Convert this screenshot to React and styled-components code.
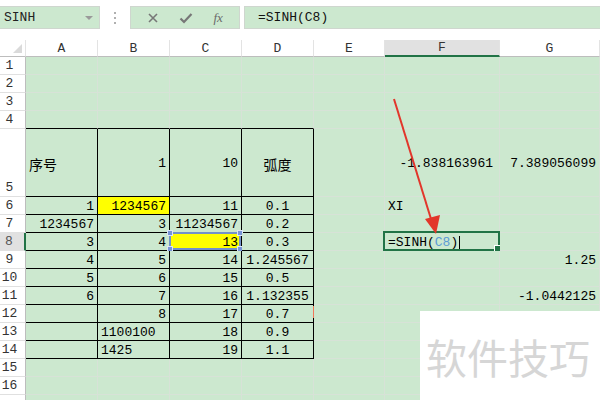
import React from "react";
import styled, { createGlobalStyle, css } from "styled-components";

const GREEN = "#cce8cf";
const GRID = "#d7e2d7";
const MONO = `"Liberation Mono", "DejaVu Sans Mono", monospace`;
const CJK = `"Noto Sans CJK SC", "Noto Sans", sans-serif`;

const Global = createGlobalStyle`
  html, body { margin: 0; padding: 0; background: #fff; }
  body { width: 600px; height: 400px; overflow: hidden; }
`;

const Page = styled.div`
  position: relative;
  width: 600px;
  height: 400px;
  overflow: hidden;
  background: #fff;
  font-family: ${MONO};
`;

const TopBar = styled.div`
  display: flex;
  align-items: center;
  height: 40px;
  padding: 6px 0 11px;
  box-sizing: border-box;
`;

const Box = styled.div`
  height: 23px;
  box-sizing: border-box;
  background: ${GREEN};
  border: 1px solid #cfd6cf;
  display: flex;
  align-items: center;
`;

const NameBox = styled(Box)`
  width: 100px;
  padding: 0 6px 0 4px;
  justify-content: space-between;
  font-size: 13px;
  color: #222;
  border-left: none;
`;

const Caret = styled.span`
  width: 0;
  height: 0;
  border-left: 4px solid transparent;
  border-right: 4px solid transparent;
  border-top: 4px solid #9a9a9a;
`;

const Dots = styled.div`
  width: 30px;
  display: flex;
  flex-direction: column;
  align-items: center;
  gap: 3px;
  & > span { width: 2px; height: 2px; background: #b0b0b0; }
`;

const IconBox = styled(Box)`
  width: 110px;
  justify-content: space-around;
  padding: 0 6px;
  color: #707070;
`;

const Fx = styled.span`
  font-family: "Liberation Serif", serif;
  font-style: italic;
  font-size: 13px;
  color: #6a6a6a;
`;

const FormulaBox = styled(Box)`
  flex: 1;
  margin-left: 4px;
  padding-left: 13px;
  font-size: 13px;
  color: #111;
  border-right: none;
`;

const Sheet = styled.div`
  display: grid;
  grid-template-columns: 26px 72px 72px 72px 72px 71px 115px 100px;
  grid-template-rows: ${(p) => p.$rows};
`;

const ColHead = styled.div`
  box-sizing: border-box;
  display: flex;
  align-items: center;
  justify-content: center;
  font-size: 13px;
  color: #333;
  background: ${(p) => (p.$active ? "#e1e1e1" : "#fff")};
  border-right: 1px solid #e3e3e3;
  border-bottom: ${(p) => (p.$active ? "2px solid #217346" : "1px solid #bdbdbd")};
`;

const Corner = styled.div`
  position: relative;
  background: #fff;
  box-sizing: border-box;
  border-right: 1px solid #e3e3e3;
  border-bottom: 1px solid #bdbdbd;
  &::after {
    content: "";
    position: absolute;
    right: 3px;
    bottom: 3px;
    border-left: 9px solid transparent;
    border-bottom: 9px solid #dadada;
  }
`;

const RowHead = styled.div`
  box-sizing: border-box;
  display: flex;
  align-items: flex-end;
  justify-content: center;
  padding: 0 6px 0 0;
  font-size: 13px;
  line-height: 17px;
  color: ${(p) => (p.$active ? "#555" : "#333")};
  background: ${(p) => (p.$active ? "#e1e1e1" : "#fff")};
  border-bottom: 1px solid #e0e0e0;
  border-right: ${(p) => (p.$active ? "2px solid #217346" : "1px solid #bdbdbd")};
`;

const Cell = styled.div`
  position: relative;
  box-sizing: border-box;
  display: flex;
  align-items: center;
  min-width: 0;
  white-space: nowrap;
  font-size: 13px;
  color: #000;
  padding: 2px 3px 0 3px;
  background: ${(p) => p.$fill || GREEN};
  border-right: 1px solid ${(p) => (p.$br ? "#000" : GRID)};
  border-bottom: 1px solid ${(p) => (p.$bb ? "#000" : GRID)};
  justify-content: ${(p) =>
    p.$align === "right" ? "flex-end" : p.$align === "center" ? "center" : "flex-start"};
  ${(p) => p.$cjk && css`font-family: ${CJK}; font-size: 14px;`}
  ${(p) => p.$pr && css`padding-right: ${p.$pr}px;`}
  ${(p) =>
    p.$mark &&
    css`
      &::after {
        content: "";
        position: absolute;
        right: -1px;
        top: 1px;
        width: 1px;
        height: 12px;
        background: #f0785a;
      }
    `}
`;

const RefBox = styled.div`
  position: absolute;
  left: -1px;
  top: -1px;
  right: 0;
  bottom: 0;
  border: 2px solid #7391cc;
  pointer-events: none;
`;

const Handle = styled.span`
  position: absolute;
  width: 6px;
  height: 6px;
  background: #7895d6;
  border: 1px solid #dfe6f6;
  box-sizing: border-box;
  ${(p) => (p.$t ? "top: -4px;" : "bottom: -4px;")}
  ${(p) => (p.$l ? "left: -4px;" : "right: -4px;")}
`;

const EditBox = styled.div`
  position: absolute;
  left: -2px;
  top: -2px;
  right: -1px;
  bottom: -1px;
  border: 2px solid #217346;
  pointer-events: none;
  &::after {
    content: "";
    position: absolute;
    right: -3px;
    bottom: -3px;
    width: 5px;
    height: 5px;
    background: #217346;
    border: 1px solid #fff;
  }
`;

const RefText = styled.span`
  color: #5b9bd5;
`;

const TextCursor = styled.span`
  display: inline-block;
  width: 1px;
  height: 14px;
  background: #000;
  margin-left: 1px;
  vertical-align: middle;
`;

const Arrow = styled.svg`
  position: absolute;
  left: 0;
  top: 0;
  pointer-events: none;
`;

const Watermark = styled.div`
  position: absolute;
  left: 420px;
  top: 311px;
  width: 180px;
  height: 89px;
  background: #fff;
  display: flex;
  align-items: center;
  padding-left: 6px;
  box-sizing: border-box;
  font-family: ${CJK};
  font-size: 41px;
  color: #d6d6d6;
`;

const cols = ["A", "B", "C", "D", "E", "F", "G"];

const R = (v) => ({ t: v, align: "right" });
const L = (v) => ({ t: v, align: "left" });
const C = (v) => ({ t: v, align: "center" });

const rows = [
  { n: 1, h: 18, cells: [] },
  { n: 2, h: 18, cells: [] },
  { n: 3, h: 18, cells: [] },
  { n: 4, h: 18, cells: [] },
  {
    n: 5,
    h: 68,
    cells: [
      { t: "序号", align: "left", cjk: true },
      R("1"),
      R("10"),
      { t: "弧度", align: "center", cjk: true },
      null,
      { t: "-1.838163961", align: "right", pr: 6 },
      R("7.389056099"),
    ],
  },
  { n: 6, h: 18, cells: [R("1"), { t: "1234567", align: "right", fill: "#ffff00" }, R("11"), C("0.1"), null, L("XI")] },
  { n: 7, h: 18, cells: [R("1234567"), R("3"), R("11234567"), C("0.2")] },
  {
    n: 8,
    h: 18,
    active: true,
    cells: [R("3"), R("4"), { t: "13", align: "right", fill: "#ffff00", ref: true }, C("0.3"), null, { edit: true }],
  },
  { n: 9, h: 18, cells: [R("4"), R("5"), R("14"), C("1.245567"), null, null, R("1.25")] },
  { n: 10, h: 18, cells: [R("5"), R("6"), R("15"), C("0.5")] },
  { n: 11, h: 18, cells: [R("6"), R("7"), R("16"), C("1.132355"), null, null, R("-1.0442125")] },
  { n: 12, h: 18, cells: [null, R("8"), R("17"), { t: "0.7", align: "center", mark: true }] },
  { n: 13, h: 18, cells: [null, L("1100100"), R("18"), C("0.9")] },
  { n: 14, h: 18, cells: [null, L("1425"), R("19"), C("1.1")] },
  { n: 15, h: 18, cells: [] },
  { n: 16, h: 18, cells: [] },
  { n: 17, h: 18, cells: [], hideLabel: true },
];

const rowTemplate = `17px ${rows.map((r) => r.h + "px").join(" ")}`;

function renderCell(row, ci) {
  const c = row.cells[ci] || null;
  const inTable = row.n >= 5 && row.n <= 14 && ci <= 3;
  const br = inTable;
  const bb = (inTable || row.n === 4) && ci <= 3;
  const key = `${row.n}-${ci}`;
  if (c && c.edit) {
    return (
      <Cell key={key} $align="left" $br={br} $bb={bb}>
        <span>
          =SINH(<RefText>C8</RefText>)
        </span>
        <TextCursor />
        <EditBox />
      </Cell>
    );
  }
  return (
    <Cell
      key={key}
      $align={c ? c.align : "left"}
      $fill={c ? c.fill : undefined}
      $cjk={c ? c.cjk : false}
      $pr={c ? c.pr : undefined}
      $mark={c ? c.mark : false}
      $br={br}
      $bb={bb}
    >
      {c ? c.t : null}
      {c && c.ref ? (
        <RefBox>
          <Handle $t $l />
          <Handle $t />
          <Handle $l />
          <Handle />
        </RefBox>
      ) : null}
    </Cell>
  );
}

export default function App() {
  return (
    <Page>
      <Global />
      <TopBar>
        <NameBox>
          <span>SINH</span>
          <Caret />
        </NameBox>
        <Dots>
          <span />
          <span />
          <span />
        </Dots>
        <IconBox>
          <svg width="12" height="12" viewBox="0 0 12 12">
            <path d="M2 2 L10 10 M10 2 L2 10" stroke="#777" strokeWidth="1.6" />
          </svg>
          <svg width="14" height="12" viewBox="0 0 14 12">
            <path d="M1.5 6.5 L5 10 L12.5 2" stroke="#777" strokeWidth="2.2" fill="none" />
          </svg>
          <Fx>fx</Fx>
        </IconBox>
        <FormulaBox>=SINH(C8)</FormulaBox>
      </TopBar>
      <Sheet $rows={rowTemplate}>
        <Corner />
        {cols.map((c) => (
          <ColHead key={c} $active={c === "F"}>
            {c}
          </ColHead>
        ))}
        {rows.map((row) => (
          <React.Fragment key={row.n}>
            <RowHead $active={row.active}>{row.hideLabel ? null : row.n}</RowHead>
            {cols.map((_, ci) => renderCell(row, ci))}
          </React.Fragment>
        ))}
      </Sheet>
      <Arrow width="600" height="400" viewBox="0 0 600 400">
        <line x1="394" y1="99" x2="431" y2="219" stroke="#e2362b" strokeWidth="2" />
        <polygon points="425,219 440,215 436,234" fill="#e2362b" />
      </Arrow>
      <Watermark>软件技巧</Watermark>
    </Page>
  );
}
